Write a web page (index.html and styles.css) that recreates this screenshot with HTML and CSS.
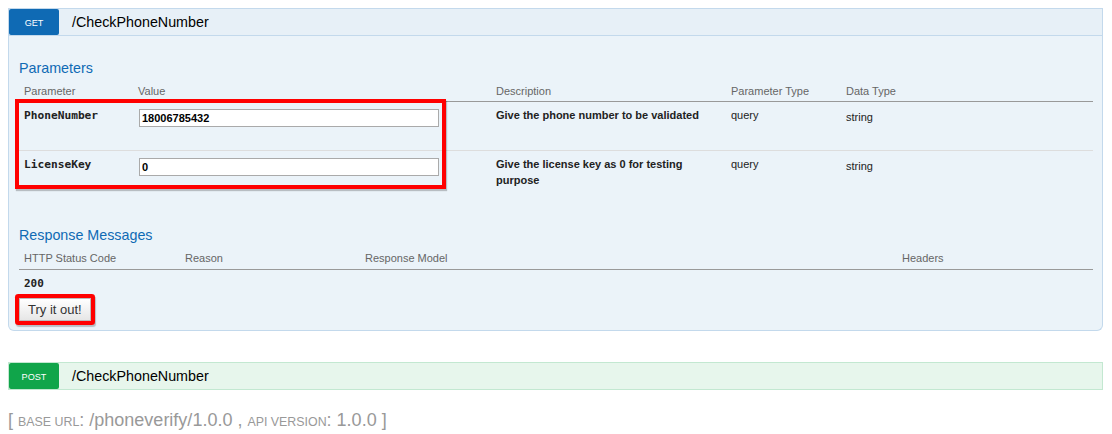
FILE: index.html
```html
<!DOCTYPE html>
<html>
<head>
<meta charset="utf-8">
<link rel="stylesheet" href="styles.css">
</head>
<body>
<div class="page">
  <div class="op op-get">
    <div class="op-head"><span class="method">GET</span><span class="path">/CheckPhoneNumber</span></div>
    <div class="op-body">
      <h4 class="sec-title">Parameters</h4>
      <div class="ptable">
        <div class="prow phead">
          <div class="cell">Parameter</div>
          <div class="cell">Value</div>
          <div class="cell">Description</div>
          <div class="cell">Parameter Type</div>
          <div class="cell">Data Type</div>
        </div>
        <div class="prow param sep">
          <div class="cell code">PhoneNumber</div>
          <div class="cell"><input class="pinput" type="text" value="18006785432"></div>
          <div class="cell desc">Give the phone number to be validated</div>
          <div class="cell">query</div>
          <div class="cell dtype">string</div>
        </div>
        <div class="prow param">
          <div class="cell code">LicenseKey</div>
          <div class="cell"><input class="pinput" type="text" value="0"></div>
          <div class="cell desc">Give the license key as 0 for testing purpose</div>
          <div class="cell">query</div>
          <div class="cell dtype">string</div>
        </div>
        <div class="callout"></div>
      </div>
      <h4 class="sec-title resp-title">Response Messages</h4>
      <div class="rtable">
        <div class="rrow rhead">
          <div class="cell">HTTP Status Code</div>
          <div class="cell">Reason</div>
          <div class="cell">Response Model</div>
          <div class="cell">Headers</div>
        </div>
        <div class="rrow rbody">
          <div class="cell code">200</div>
          <div class="cell"></div>
          <div class="cell"></div>
          <div class="cell"></div>
        </div>
      </div>
      <button class="try" type="button">Try it out!</button>
    </div>
  </div>
  <div class="op op-post">
    <div class="op-head"><span class="method">POST</span><span class="path">/CheckPhoneNumber</span></div>
  </div>
  <div class="footer">[ <span class="sc">base url</span>: /phoneverify/1.0.0 , <span class="sc">api version</span>: 1.0.0 ]</div>
</div>
</body>
</html>
```
FILE: styles.css
```css
* { box-sizing: border-box; }
html, body { margin: 0; padding: 0; background: #fff; }
body {
  font-family: "Liberation Sans", Arial, Helvetica, sans-serif;
  font-size: 13px;
  color: #000;
}
.page {
  width: 1095px;
  margin: 0 0 0 8px;
  padding-top: 8px;
}

/* operation heading */
.op-head {
  display: flex;
  align-items: stretch;
  height: 28px;
  border: 1px solid #c3d9ec;
  background: #e7f0f7;
}
.op-get .op-head { border-color: #c3d9ec; background: #e7f0f7; }
.op-post .op-head { border-color: #c3e8d1; background: #e7f6ec; }
.op-post { margin-top: 31px; }

.method {
  width: 50px;
  height: 26px;
  border-radius: 2px;
  color: #fff;
  font-size: 9.1px;
  text-align: center;
  text-transform: uppercase;
  padding-top: 3px;
  line-height: 23px;
}
.op-get .method { background: #0f6ab4; }
.op-post .method { background: #10a54a; }
.path {
  padding-left: 13px;
  font-size: 14.3px;
  line-height: 26px;
  color: #000;
}

/* body */
.op-body {
  background: #ebf3f9;
  border: 1px solid #c3d9ec;
  border-top: none;
  border-radius: 0 0 6px 6px;
  padding: 24px 10px 9px 10px;
}
.sec-title {
  margin: 0;
  font-size: 14.3px;
  font-weight: normal;
  line-height: 16px;
  color: #0f6ab4;
}
.resp-title { margin-top: 28px; }

.cell { padding: 0 5px; }

.ptable {
  position: relative;
  width: 1074px;
}
.prow {
  display: grid;
  grid-template-columns: 114px 358px 235px 115px 1fr;
}
.rrow {
  display: grid;
  grid-template-columns: 161px 180px 537px 1fr;
}
.phead, .rhead {
  color: #666;
  font-size: 11px;
  line-height: 13px;
  border-bottom: 1px solid #999;
}
.phead { padding: 9px 0 3px; }
.rhead { padding: 9px 0 4px; }

.param {
  min-height: 48px;
  padding: 5px 0 6px;
  font-size: 11px;
  line-height: 16px;
  color: #222;
}
.param.sep {
  min-height: 49px;
  border-bottom: 1px solid #ddd;
}
.code {
  font-family: "DejaVu Sans Mono", Menlo, monospace;
  font-weight: bold;
  font-size: 11.2px;
  color: #222;
}
.param .code { padding-top: 1px; }
.desc { font-weight: bold; color: #222; }
.dtype { padding-top: 2px; }
.pinput {
  display: block;
  margin: 2px 0 0 1px;
  width: 300px;
  height: 18px;
  border: 1px solid #aaa;
  background: #fff;
  padding: 0 2px;
  font-family: "Liberation Sans", Arial, sans-serif;
  font-size: 11px;
  font-weight: bold;
  color: #000;
  outline: none;
}

/* annotation overlay */
.callout {
  position: absolute;
  left: -4px;
  top: 23px;
  width: 431px;
  height: 90px;
  border: 4px solid #f00;
  box-shadow: 1px 2px 1px rgba(0, 0, 0, 0.22);
  pointer-events: none;
}

.rtable { width: 1074px; }
.rbody {
  padding: 7px 0 3px;
  font-size: 11px;
  line-height: 13px;
}
.rbody .code { font-size: 11px; }

.try {
  display: block;
  margin: 5px 0 0 0;
  height: 23px;
  padding: 0 8px;
  font-family: "Liberation Sans", Arial, sans-serif;
  font-size: 13px;
  color: #333;
  border: 1px solid #bbb;
  border-radius: 1px;
  background: linear-gradient(#ffffff, #e6e6e6);
  box-shadow: 0 0 0 4px #f00, 1px 2px 1px 4px rgba(0, 0, 0, 0.22);
}

.footer {
  margin-top: 20px;
  font-size: 18px;
  line-height: 21px;
  color: #999;
}
.sc {
  text-transform: uppercase;
  font-size: 12.4px;
}
```
